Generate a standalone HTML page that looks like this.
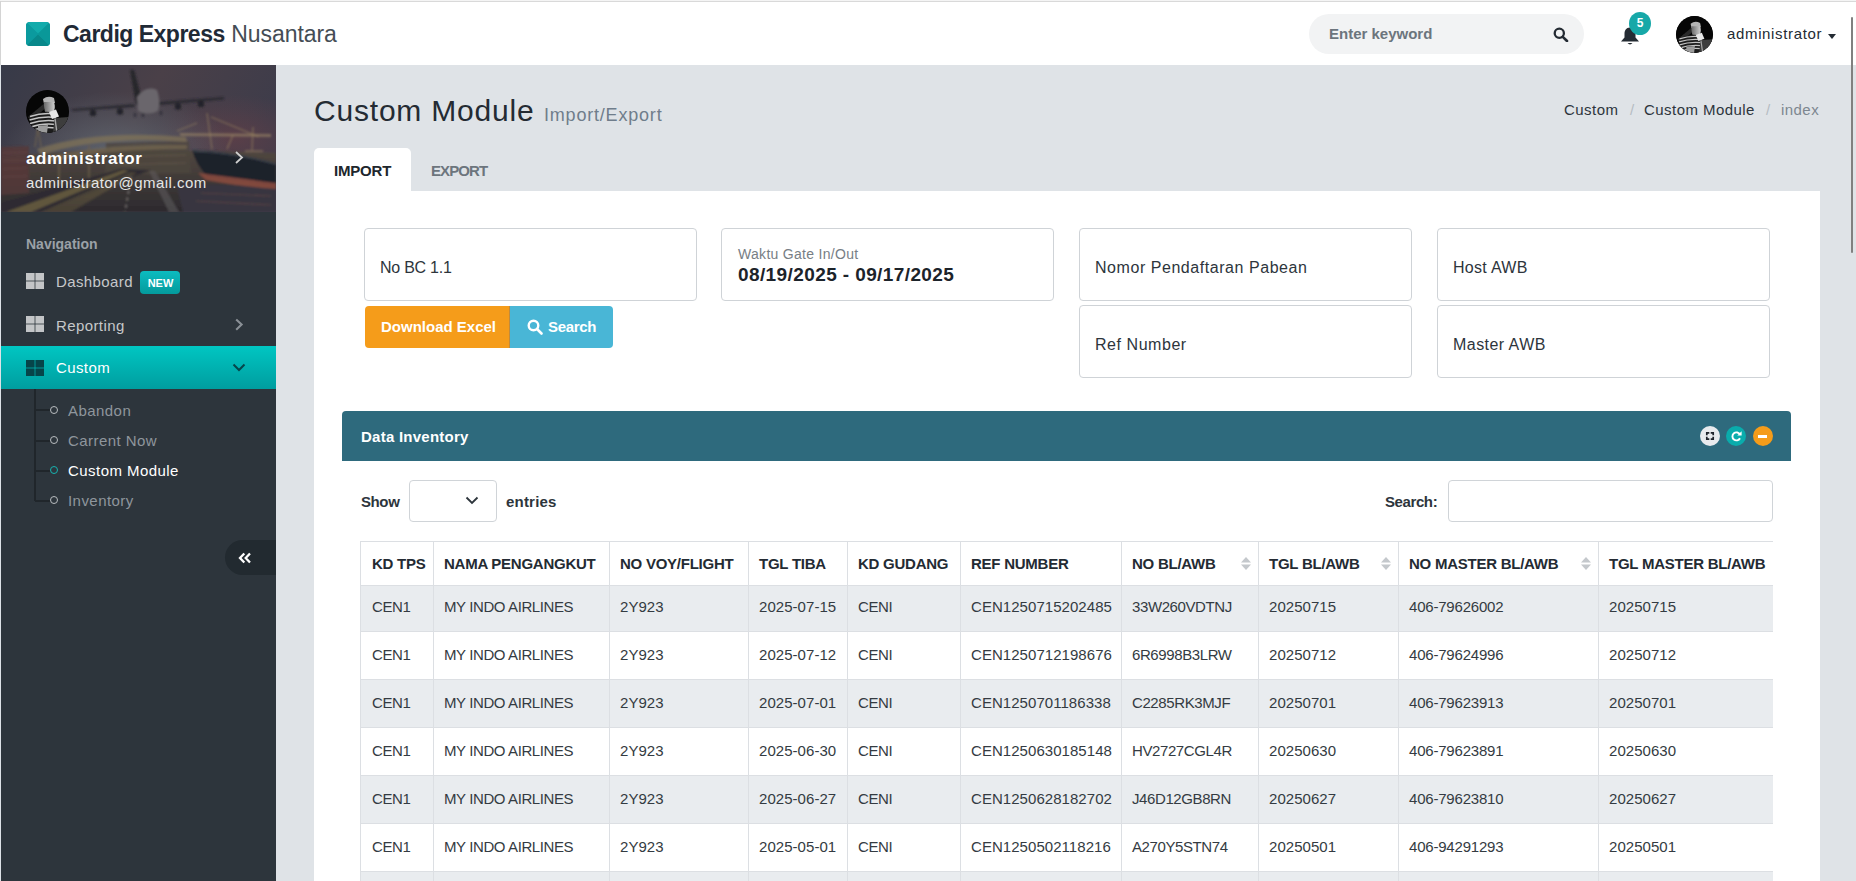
<!DOCTYPE html>
<html><head><meta charset="utf-8">
<style>
*{box-sizing:border-box;margin:0;padding:0}
html,body{width:1856px;height:881px;overflow:hidden;background:#dfe3e7;font-family:"Liberation Sans",sans-serif;color:#2d353c}
.a{position:absolute}
#hdr{left:0;top:0;width:1856px;height:65px;background:#fff;border-top:1px solid #f4f4f4}
#hdr .tb{left:0;top:0;width:1856px;height:1px;background:#d9d9d9}
#hdr .lb{left:0;top:0;width:1px;height:64px;background:#d4d4d4}
.logo{left:26px;top:21px;width:24px;height:24px;border-radius:4px;overflow:hidden}
.brand{left:63px;top:18px;font-size:23px;color:#1f2a36;white-space:nowrap;line-height:30px}
.brand b{font-weight:700;letter-spacing:-0.5px}
.brand span{font-weight:400;letter-spacing:-0.05px;color:#454d55}
.hsearch{left:1309px;top:13px;width:275px;height:40px;border-radius:20px;background:#f2f3f4}
.hsearch .ph{left:20px;top:11px;font-size:15px;font-weight:700;color:#6c757d;letter-spacing:0px;line-height:18px}
#side{left:0;top:65px;width:276px;height:816px;background:#2d353c}
#side .lb{left:0;top:0;width:1px;height:816px;background:#dde2e7}
#content{left:276px;top:65px;width:1580px;height:816px;background:#dfe3e7}
.scroll{left:1851px;top:17px;width:2px;height:236px;background:#808080;border-radius:1px}

.prof{left:1px;top:0;width:275px;height:147px;overflow:hidden;background:#3a3946}
.pav{left:25px;top:25px;width:43px;height:43px;border-radius:50%;background:#111;overflow:hidden}
.pname{left:25px;top:84px;font-size:17px;font-weight:700;color:#fff;letter-spacing:0.6px;line-height:20px;white-space:nowrap}
.pmail{left:25px;top:109px;font-size:15px;color:#e6e6e6;letter-spacing:0.45px;line-height:18px;white-space:nowrap}
.pchev{left:233px;top:86px}
.navh{left:26px;top:171px;font-size:14px;font-weight:700;color:#9ba1a7;line-height:16px}
.ni{left:1px;width:275px;height:43px}
.ni .ic{left:25px;top:0;width:18px;height:16px}
.ni .ic i{position:absolute;width:8px;height:7px;background:#c3c5c7}
.ni .tx{left:55px;font-size:15px;color:#c6c8ca;letter-spacing:0.4px;line-height:18px;white-space:nowrap}
.badge-new{left:140px;top:206px;width:40px;height:23px;border-radius:4px;background:linear-gradient(#0cbcc0,#049a9c);color:#fff;font-size:11px;font-weight:700;text-align:center;line-height:24px;padding-left:1px}
.act{left:1px;top:281px;width:275px;height:43px;background:linear-gradient(#00c6c2,#009d9f)}
.sub .tx{left:68px;font-size:15px;color:#8f969c;letter-spacing:0.45px;line-height:18px;white-space:nowrap}
.sub .cir{left:49.5px;width:8px;height:8px;border-radius:50%;border:1.5px solid #b9bdc0}
.sub .hl{left:35px;width:15px;height:2px;background:#20262b}
.vline{left:34px;top:324px;width:2px;height:112px;background:#20262b}
.collapse{left:225px;top:475px;width:51px;height:35px;border-radius:18px 0 0 18px;background:#222a30}

.ptitle{left:314px;top:93px;font-size:30px;color:#242b33;letter-spacing:0.8px;line-height:36px;white-space:nowrap}
.psub{left:544px;top:105px;font-size:18px;color:#6f7d8b;letter-spacing:0.8px;line-height:20px;white-space:nowrap}
.bc{top:101px;font-size:15px;line-height:18px;white-space:nowrap;letter-spacing:0.45px}
.tab{left:314px;top:148px;width:97px;height:43px;background:#fff;border-radius:5px 5px 0 0}
.tabt{top:162px;font-size:15px;font-weight:700;line-height:18px;white-space:nowrap}
.panel{left:314px;top:191px;width:1506px;height:700px;background:#fff}
.inp{width:333px;height:73px;border:1px solid #cfd3d7;border-radius:4px;background:#fff}
.inp .t{left:15px;top:30px;font-size:16px;color:#2d353c;line-height:18px;white-space:nowrap}
.btn{top:306px;height:42px;color:#fff;font-size:15px;font-weight:700;line-height:42px;white-space:nowrap}
.phd{left:342px;top:411px;width:1449px;height:50px;background:#2e6a7d;border-radius:4px 4px 0 0}
.phd .t{left:19px;top:17px;font-size:15px;font-weight:700;color:#fff;letter-spacing:0.25px;line-height:18px}
.phd .c{top:15px;width:20px;height:20px;border-radius:50%}
.lbl{font-size:15px;font-weight:700;color:#2d353c;line-height:18px;white-space:nowrap}
.sel{left:409px;top:480px;width:88px;height:42px;border:1px solid #d0d4d8;border-radius:4px}
.dsearch{left:1448px;top:480px;width:325px;height:42px;border:1px solid #d0d4d8;border-radius:4px}
.tw{left:360px;top:541px;width:1413px;height:360px;overflow:hidden}
table{border-collapse:collapse;table-layout:fixed;width:1600px}
td,th{border:1px solid #dcdfe3;padding:0 0 0 10px;letter-spacing:-0.25px;text-align:left;white-space:nowrap;font-size:15px;overflow:hidden}
th{height:44px;font-weight:700;color:#242b33;position:relative}
td{height:48px;color:#343b42;padding-bottom:3px}
td{letter-spacing:0.05px}
td:first-child,th:first-child{padding-left:11px}
td:nth-child(1),td:nth-child(2),td:nth-child(5),td:nth-child(7){letter-spacing:-0.4px}
td:nth-child(9){letter-spacing:-0.2px}
tr.odd td{background:#e9ecef}
tr.first td{height:46px;padding-bottom:4px}
.srt{position:absolute;right:7px;top:15px;line-height:0}

.hsicon{left:1553px;top:26px}
.bell{left:1620px;top:25px}
.nbadge{left:1629px;top:11px;width:22px;height:23px;border-radius:50%;background:#17a8a8;color:#fff;font-size:12px;font-weight:700;line-height:23px;text-align:center}
.havatar{left:1676px;top:15px;width:37px;height:37px;border-radius:50%;overflow:hidden;background:#0d0d0d}
.hname{left:1727px;top:24px;font-size:15px;color:#242b33;letter-spacing:0.65px;line-height:18px;white-space:nowrap}
.caret{left:1828px;top:33px;width:0;height:0;border-left:4.5px solid transparent;border-right:4.5px solid transparent;border-top:5px solid #242b33}
</style></head><body>
<div id="hdr" class="a">
  <div class="a tb"></div><div class="a lb"></div>
  <div class="a logo">
    <svg width="24" height="24" viewBox="0 0 24 24"><rect width="24" height="24" fill="#0b9a9c"/><polygon points="0,0 24,0 12,11.5" fill="#12abab"/><polygon points="0,24 24,24 12,12.5" fill="#08888a"/><polygon points="0,0 0,24 12,12" fill="#0b9a9e"/><polygon points="24,0 24,24 12,12" fill="#0a9899"/></svg>
  </div>
  <div class="a brand"><b>Cardig Express</b> <span>Nusantara</span></div>
  <div class="a hsearch"><div class="a ph">Enter keyword</div></div>
  <svg class="a hsicon" width="16" height="15" viewBox="0 0 16 15"><circle cx="6.3" cy="6.3" r="4.6" stroke="#242b33" stroke-width="2.3" fill="none"/><path d="M9.8 9.8 L14 14" stroke="#242b33" stroke-width="2.6" stroke-linecap="round"/></svg>
  <svg class="a bell" width="20" height="20" viewBox="0 0 20 20"><path d="M10 1.5 C6 1.5 4.5 4.5 4.5 8 L4.5 11.5 L1 15.5 L19 15.5 L15.5 11.5 L15.5 8 C15.5 4.5 14 1.5 10 1.5Z" fill="#242b33"/><path d="M7.5 17 L12.5 17 Q10 19.8 7.5 17Z" fill="#242b33"/></svg>
  <div class="a nbadge">5</div>
  <div class="a havatar"><svg width="37" height="37" viewBox="0 0 43 43"><defs><filter id="ablh" x="-10%" y="-10%" width="120%" height="120%"><feGaussianBlur stdDeviation="0.5"/></filter><clipPath id="ach"><circle cx="21.5" cy="21.5" r="21.5"/></clipPath><linearGradient id="fgh" x1="0" y1="0" x2="1" y2="0"><stop offset="0" stop-color="#6a6a6a"/><stop offset="1" stop-color="#d0d0d0"/></linearGradient></defs><g clip-path="url(#ach)"><rect width="43" height="43" fill="#060606"/><g filter="url(#ablh)">
<path d="M2 27 L20 12 L23 15 L5 31Z" fill="#2a2a2a"/>
<path d="M17 9 Q22 5 28 8 L29 13 L18 14Z" fill="#b4b4b4"/>
<path d="M18 12 L28 12 Q30 18 27 23 L21 25 Q18 21 18 16Z" fill="url(#fgh)"/>
<path d="M4 26 Q14 21 24 22 L30 26 L30 43 L6 43Z" fill="#1c1c1c"/>
<path d="M4 26.5 Q16 22.5 29 24 M3.5 30 Q16 26 30 27.5 M4 33.5 Q16 29.5 30 31 M5 37 Q16 33 30 34.5 M7 40.5 Q16 36.5 30 38" stroke="#c4c4c4" stroke-width="1.5" fill="none"/>
<path d="M23 22 L30 19.5 L33 26.5 L26 29Z" fill="#e8e8e8"/>
<path d="M28.5 28 L43 27 L43 43 L27 43Z" fill="#3c3c3c"/>
<path d="M29 28.5 L31 43" stroke="#a8a8a8" stroke-width="1.4"/>
<path d="M12 36 L22 35 L21 43 L12 43Z" fill="#9c9c9c"/>
</g></g></svg></div>
  <div class="a hname">administrator</div>
  <div class="a caret"></div>
</div>
<div id="side" class="a"><div class="a lb"></div>
  <div class="a prof">
    <svg class="a" style="left:0;top:0" width="275" height="147" viewBox="0 0 275 147">
      <defs>
        <linearGradient id="sky" x1="0" y1="0" x2="1" y2="0.3"><stop offset="0" stop-color="#373a48"/><stop offset="0.55" stop-color="#4a4048"/><stop offset="1" stop-color="#3e3c4a"/></linearGradient>
        <radialGradient id="haze" cx="0.42" cy="0.6" r="0.42"><stop offset="0" stop-color="#66707a" stop-opacity="0.75"/><stop offset="1" stop-color="#66707a" stop-opacity="0"/></radialGradient>
        <radialGradient id="red" cx="0.85" cy="0.5" r="0.3"><stop offset="0" stop-color="#6a4048" stop-opacity="0.6"/><stop offset="1" stop-color="#6a4048" stop-opacity="0"/></radialGradient>
        <linearGradient id="grnd" x1="0" y1="0" x2="0" y2="1"><stop offset="0" stop-color="#524840"/><stop offset="1" stop-color="#2c2a2e"/></linearGradient>
        <filter id="bl" x="-5%" y="-5%" width="110%" height="110%"><feGaussianBlur stdDeviation="1"/></filter>
      </defs>
      <rect width="275" height="147" fill="url(#sky)"/>
      <rect width="275" height="147" fill="url(#red)"/>
      <rect width="275" height="147" fill="url(#haze)"/>
      <g filter="url(#bl)">
      <path d="M0 92 Q60 86 120 84 L275 88 L275 147 L0 147Z" fill="url(#grnd)"/>
      <path d="M105 78 L188 76 L190 108 L104 110Z" fill="#4e463e" opacity="0.8"/>
      <path d="M110 84 L185 82 M110 92 L185 90 M110 100 L185 98" stroke="#6e6250" stroke-width="1" opacity="0.6"/>
      <path d="M0 82 L28 81 L28 128 L0 130Z" fill="#55383a" opacity="0.85"/>
      <path d="M2 88 L26 87 M2 96 L26 95 M2 104 L26 103 M2 112 L26 111" stroke="#6a4846" stroke-width="1" opacity="0.7"/>
      <path d="M36 84 Q95 64 185 72 L186 77 Q100 70 40 90Z" fill="#857656" opacity="0.65"/>
      <path d="M40 94 Q100 78 186 80 L186 84 Q100 84 44 98Z" fill="#7a6a50" opacity="0.6"/>
      <path d="M34 82 L37 62 L40 82 M58 90 L58 120 M88 80 L88 118" stroke="#6e604c" stroke-width="1.5" fill="none" opacity="0.8"/>
      <path d="M178 68 L270 69 L270 72 L180 71Z" fill="#9a8666" opacity="0.6"/>
      <path d="M206 48 L211 84 M196 58 L176 66 M210 52 L258 72 M252 62 L251 86 M244 86 L262 86 M232 70 L226 84" stroke="#98845f" stroke-width="1.3" fill="none" opacity="0.6"/>
      <path d="M0 147 L0 138 L120 104 L150 105 L40 147Z" fill="#2e2c30"/>
      <path d="M5 147 L122 105 L128 106 L30 147Z" fill="#a08a50" opacity="0.45"/>
      <path d="M40 147 L130 107 L136 108 L70 147Z" fill="#8a7848" opacity="0.3"/>
      <path d="M130 112 L124 147" stroke="#9a9490" stroke-width="1.6" stroke-dasharray="3 4" opacity="0.6"/>
      <path d="M148 106 L154 106 L178 147 L168 147Z" fill="#5e5a5e" opacity="0.6"/>
      <path d="M175 118 L275 122 L275 147 L182 147Z" fill="#383540"/>
      <path d="M200 128 L270 131 M195 136 L270 140" stroke="#6a4a48" stroke-width="1.2" opacity="0.6"/>
      <path d="M191 85 Q232 86 275 98 L275 121 Q240 116 207 112 Q195 100 191 85Z" fill="#1b212b"/>
      <path d="M197 108 Q238 113 275 118 L275 124 Q236 121 205 115Z" fill="#8a4a3e" opacity="0.9"/>
      <path d="M192 86 Q232 87 275 99" stroke="#5a6068" stroke-width="1" fill="none" opacity="0.8"/>
      <path d="M70 44 L133 39 L134 42 L72 46Z" fill="#2c2a30"/>
      <path d="M157 37 L223 32 L223 34.5 L158 40Z" fill="#2c2a30"/>
      <path d="M129 5 L133 5 L142 38 L135 40Z" fill="#25252c"/>
      <path d="M136 32 Q145 20 156 25 Q160 36 157 46 Q147 51 137 46Z" fill="#6a666c"/>
      <circle cx="92" cy="48" r="3.3" fill="#23232a"/><circle cx="119" cy="46.5" r="3.3" fill="#23232a"/><circle cx="177" cy="41.5" r="3.3" fill="#23232a"/><circle cx="200" cy="39" r="3.3" fill="#23232a"/>
      <path d="M134 48 L134 52 M142 48 L142 52 M160 46 L160 50" stroke="#2a2a30" stroke-width="1.5"/>
      </g>
    </svg>
    <div class="a pav"><svg width="43" height="43" viewBox="0 0 43 43"><defs><filter id="ablp" x="-10%" y="-10%" width="120%" height="120%"><feGaussianBlur stdDeviation="0.5"/></filter><clipPath id="acp"><circle cx="21.5" cy="21.5" r="21.5"/></clipPath><linearGradient id="fgp" x1="0" y1="0" x2="1" y2="0"><stop offset="0" stop-color="#6a6a6a"/><stop offset="1" stop-color="#d0d0d0"/></linearGradient></defs><g clip-path="url(#acp)"><rect width="43" height="43" fill="#060606"/><g filter="url(#ablp)">
<path d="M2 27 L20 12 L23 15 L5 31Z" fill="#2a2a2a"/>
<path d="M17 9 Q22 5 28 8 L29 13 L18 14Z" fill="#b4b4b4"/>
<path d="M18 12 L28 12 Q30 18 27 23 L21 25 Q18 21 18 16Z" fill="url(#fgp)"/>
<path d="M4 26 Q14 21 24 22 L30 26 L30 43 L6 43Z" fill="#1c1c1c"/>
<path d="M4 26.5 Q16 22.5 29 24 M3.5 30 Q16 26 30 27.5 M4 33.5 Q16 29.5 30 31 M5 37 Q16 33 30 34.5 M7 40.5 Q16 36.5 30 38" stroke="#c4c4c4" stroke-width="1.5" fill="none"/>
<path d="M23 22 L30 19.5 L33 26.5 L26 29Z" fill="#e8e8e8"/>
<path d="M28.5 28 L43 27 L43 43 L27 43Z" fill="#3c3c3c"/>
<path d="M29 28.5 L31 43" stroke="#a8a8a8" stroke-width="1.4"/>
<path d="M12 36 L22 35 L21 43 L12 43Z" fill="#9c9c9c"/>
</g></g></svg></div>
    <div class="a pname">administrator</div>
    <svg class="a pchev" width="10" height="13" viewBox="0 0 10 13"><path d="M2 1 L8 6.5 L2 12" stroke="#cfcfcf" stroke-width="1.8" fill="none"/></svg>
    <div class="a pmail">administrator@gmail.com</div>
  </div>
  <div class="a navh">Navigation</div>
  <div class="a ni" style="top:198px"><svg class="a ic" style="top:10px" width="18" height="16" viewBox="0 0 18 16"><rect x="0" y="0" width="8.6" height="7.6" fill="#c3c5c7"/><rect x="9.4" y="0" width="8.6" height="7.6" fill="#c3c5c7"/><rect x="0" y="8.4" width="8.6" height="7.6" fill="#c3c5c7"/><rect x="9.4" y="8.4" width="8.6" height="7.6" fill="#c3c5c7"/></svg><div class="a tx" style="top:10px">Dashboard</div></div>
  <div class="a badge-new">NEW</div>
  <div class="a ni" style="top:238px"><svg class="a ic" style="top:13px" width="18" height="16" viewBox="0 0 18 16"><rect x="0" y="0" width="8.6" height="7.6" fill="#c3c5c7"/><rect x="9.4" y="0" width="8.6" height="7.6" fill="#c3c5c7"/><rect x="0" y="8.4" width="8.6" height="7.6" fill="#c3c5c7"/><rect x="9.4" y="8.4" width="8.6" height="7.6" fill="#c3c5c7"/></svg><div class="a tx" style="top:14px">Reporting</div>
    <svg class="a" style="left:233px;top:15px" width="10" height="13" viewBox="0 0 10 13"><path d="M2.2 1.5 L7.6 6.6 L2.2 11.7" stroke="#8a9096" stroke-width="2.1" fill="none"/></svg></div>
  <div class="a act ni"><svg class="a ic" style="top:14px" width="18" height="16" viewBox="0 0 18 16"><rect x="0" y="0" width="8.6" height="7.6" fill="#06454a"/><rect x="9.4" y="0" width="8.6" height="7.6" fill="#06454a"/><rect x="0" y="8.4" width="8.6" height="7.6" fill="#06454a"/><rect x="9.4" y="8.4" width="8.6" height="7.6" fill="#06454a"/></svg><div class="a tx" style="top:13px;color:#fff">Custom</div>
    <svg class="a" style="left:231px;top:17px" width="14" height="9" viewBox="0 0 14 9"><path d="M1.5 1.5 L7 7 L12.5 1.5" stroke="#06454a" stroke-width="2" fill="none"/></svg></div>
  <div class="a vline"></div>
  <div class="sub">
    <div class="a hl" style="top:344px"></div><div class="a cir" style="top:341px"></div><div class="a tx" style="top:337px">Abandon</div>
    <div class="a hl" style="top:375px"></div><div class="a cir" style="top:371px"></div><div class="a tx" style="top:367px">Carrent Now</div>
    <div class="a hl" style="top:405px"></div><div class="a cir" style="top:401px;border-color:#17b3b0"></div><div class="a tx" style="top:397px;color:#fff">Custom Module</div>
    <div class="a hl" style="top:435px"></div><div class="a cir" style="top:431px"></div><div class="a tx" style="top:427px">Inventory</div>
  </div>
  <div class="a collapse"><svg class="a" style="left:13px;top:12px" width="14" height="12" viewBox="0 0 14 12"><path d="M6.3 1.5 L2 6 L6.3 10.5 M12 1.5 L7.7 6 L12 10.5" stroke="#fff" stroke-width="2.3" fill="none"/></svg></div>
</div>
<div id="content" class="a"></div>
<div class="a ptitle">Custom Module</div>
<div class="a psub">Import/Export</div>
<div class="a bc" style="left:1564px;color:#2d353c">Custom</div>
<div class="a bc" style="left:1630px;color:#b5bcc3">/</div>
<div class="a bc" style="left:1644px;color:#2d353c">Custom Module</div>
<div class="a bc" style="left:1766px;color:#b5bcc3">/</div>
<div class="a bc" style="left:1781px;color:#7d8790">index</div>
<div class="a tab"></div>
<div class="a panel"></div>
<div class="a tabt" style="left:334px;color:#20262c;letter-spacing:-0.2px">IMPORT</div>
<div class="a tabt" style="left:431px;color:#6c757d;letter-spacing:-0.9px">EXPORT</div>
<div class="a inp" style="left:364px;top:228px"><div class="a t" style="left:15px;top:30px;letter-spacing:-0.25px">No BC 1.1</div></div>
<div class="a inp" style="left:721px;top:228px">
  <div class="a" style="left:16px;top:17px;font-size:14px;color:#777e85;letter-spacing:0.3px;line-height:16px;white-space:nowrap">Waktu Gate In/Out</div>
  <div class="a" style="left:16px;top:35px;font-size:19px;font-weight:700;color:#1c232a;letter-spacing:0.4px;line-height:22px;white-space:nowrap">08/19/2025 - 09/17/2025</div>
</div>
<div class="a inp" style="left:1079px;top:228px"><div class="a t" style="letter-spacing:0.55px">Nomor Pendaftaran Pabean</div></div>
<div class="a inp" style="left:1437px;top:228px"><div class="a t" style="letter-spacing:0.3px">Host AWB</div></div>
<div class="a inp" style="left:1079px;top:305px"><div class="a t" style="letter-spacing:0.55px">Ref Number</div></div>
<div class="a inp" style="left:1437px;top:305px"><div class="a t" style="letter-spacing:0.45px">Master AWB</div></div>
<div class="a btn" style="left:365px;width:145px;background:#f59c1a;border-radius:4px 0 0 4px;padding-left:16px">Download Excel</div>
<div class="a" style="left:509px;top:306px;width:1px;height:42px;background:#c08a3c;z-index:2"></div>
<div class="a btn" style="left:509px;width:104px;background:#49b6d6;border-radius:0 4px 4px 0;padding-left:39px;letter-spacing:-0.3px">Search</div>
<svg class="a" style="left:527px;top:319px" width="16" height="16" viewBox="0 0 16 16"><circle cx="6.5" cy="6.5" r="4.8" stroke="#fff" stroke-width="2.4" fill="none"/><path d="M10 10 L14.5 14.5" stroke="#fff" stroke-width="2.6" stroke-linecap="round"/></svg>
<div class="a phd"><div class="a t">Data Inventory</div>
  <div class="a c" style="left:1358px;background:#e8ebee"><svg class="a" style="left:0;top:0" width="20" height="20" viewBox="0 0 20 20"><path d="M6.8 9.3 L6.8 6.8 L9.3 6.8 M10.7 6.8 L13.2 6.8 L13.2 9.3 M13.2 10.7 L13.2 13.2 L10.7 13.2 M9.3 13.2 L6.8 13.2 L6.8 10.7" stroke="#1d232a" stroke-width="1.7" fill="none"/></svg></div>
  <div class="a c" style="left:1384px;background:#0aacac"><svg class="a" style="left:0;top:0" width="20" height="20" viewBox="0 0 20 20"><path d="M14 8.6 A4 4 0 1 0 14 12.2" stroke="#fff" stroke-width="1.9" fill="none"/><path d="M11.3 9.6 L15.6 9.6 L15.6 5.3Z" fill="#fff"/></svg></div>
  <div class="a c" style="left:1411px;background:#f59c1a"><div class="a" style="left:5px;top:9px;width:9px;height:3px;background:#fff"></div></div>
</div>
<div class="a lbl" style="left:361px;top:493px;letter-spacing:-0.4px">Show</div>
<div class="a sel"><svg class="a" style="left:55px;top:15px" width="14" height="9" viewBox="0 0 14 9"><path d="M1.5 1.5 L7 7 L12.5 1.5" stroke="#2d353c" stroke-width="1.8" fill="none"/></svg></div>
<div class="a lbl" style="left:506px;top:493px;letter-spacing:0.2px">entries</div>
<div class="a lbl" style="left:1385px;top:493px;letter-spacing:-0.4px">Search:</div>
<div class="a dsearch"></div>
<div class="a tw"><table>
<colgroup><col style="width:73px"><col style="width:176px"><col style="width:139px"><col style="width:99px"><col style="width:113px"><col style="width:161px"><col style="width:137px"><col style="width:140px"><col style="width:200px"><col style="width:362px"></colgroup>
<thead><tr><th>KD TPS</th><th>NAMA PENGANGKUT</th><th>NO VOY/FLIGHT</th><th>TGL TIBA</th><th>KD GUDANG</th><th>REF NUMBER</th><th>NO BL/AWB<span class="srt"><svg width="10" height="13" viewBox="0 0 10 13"><path d="M5 0 L10 5.6 L0 5.6Z" fill="#c4c8cc"/><path d="M5 13 L10 7.4 L0 7.4Z" fill="#c4c8cc"/></svg></span></th><th>TGL BL/AWB<span class="srt"><svg width="10" height="13" viewBox="0 0 10 13"><path d="M5 0 L10 5.6 L0 5.6Z" fill="#c4c8cc"/><path d="M5 13 L10 7.4 L0 7.4Z" fill="#c4c8cc"/></svg></span></th><th>NO MASTER BL/AWB<span class="srt"><svg width="10" height="13" viewBox="0 0 10 13"><path d="M5 0 L10 5.6 L0 5.6Z" fill="#c4c8cc"/><path d="M5 13 L10 7.4 L0 7.4Z" fill="#c4c8cc"/></svg></span></th><th>TGL MASTER BL/AWB</th></tr></thead>
<tbody>
<tr class="odd first"><td>CEN1</td><td>MY INDO AIRLINES</td><td>2Y923</td><td>2025-07-15</td><td>CENI</td><td>CEN1250715202485</td><td>33W260VDTNJ</td><td>20250715</td><td>406-79626002</td><td>20250715</td></tr>
<tr class=""><td>CEN1</td><td>MY INDO AIRLINES</td><td>2Y923</td><td>2025-07-12</td><td>CENI</td><td>CEN1250712198676</td><td>6R6998B3LRW</td><td>20250712</td><td>406-79624996</td><td>20250712</td></tr>
<tr class="odd"><td>CEN1</td><td>MY INDO AIRLINES</td><td>2Y923</td><td>2025-07-01</td><td>CENI</td><td>CEN1250701186338</td><td>C2285RK3MJF</td><td>20250701</td><td>406-79623913</td><td>20250701</td></tr>
<tr class=""><td>CEN1</td><td>MY INDO AIRLINES</td><td>2Y923</td><td>2025-06-30</td><td>CENI</td><td>CEN1250630185148</td><td>HV2727CGL4R</td><td>20250630</td><td>406-79623891</td><td>20250630</td></tr>
<tr class="odd"><td>CEN1</td><td>MY INDO AIRLINES</td><td>2Y923</td><td>2025-06-27</td><td>CENI</td><td>CEN1250628182702</td><td>J46D12GB8RN</td><td>20250627</td><td>406-79623810</td><td>20250627</td></tr>
<tr class=""><td>CEN1</td><td>MY INDO AIRLINES</td><td>2Y923</td><td>2025-05-01</td><td>CENI</td><td>CEN1250502118216</td><td>A270Y5STN74</td><td>20250501</td><td>406-94291293</td><td>20250501</td></tr>
<tr class="odd"><td>CEN1</td><td>MY INDO AIRLINES</td><td>2Y923</td><td>2025-04-28</td><td>CENI</td><td>CEN1250428110000</td><td>X000000000</td><td>20250428</td><td>406-94290000</td><td>20250428</td></tr>

</tbody></table></div>

<div class="a scroll"></div>
</body></html>
